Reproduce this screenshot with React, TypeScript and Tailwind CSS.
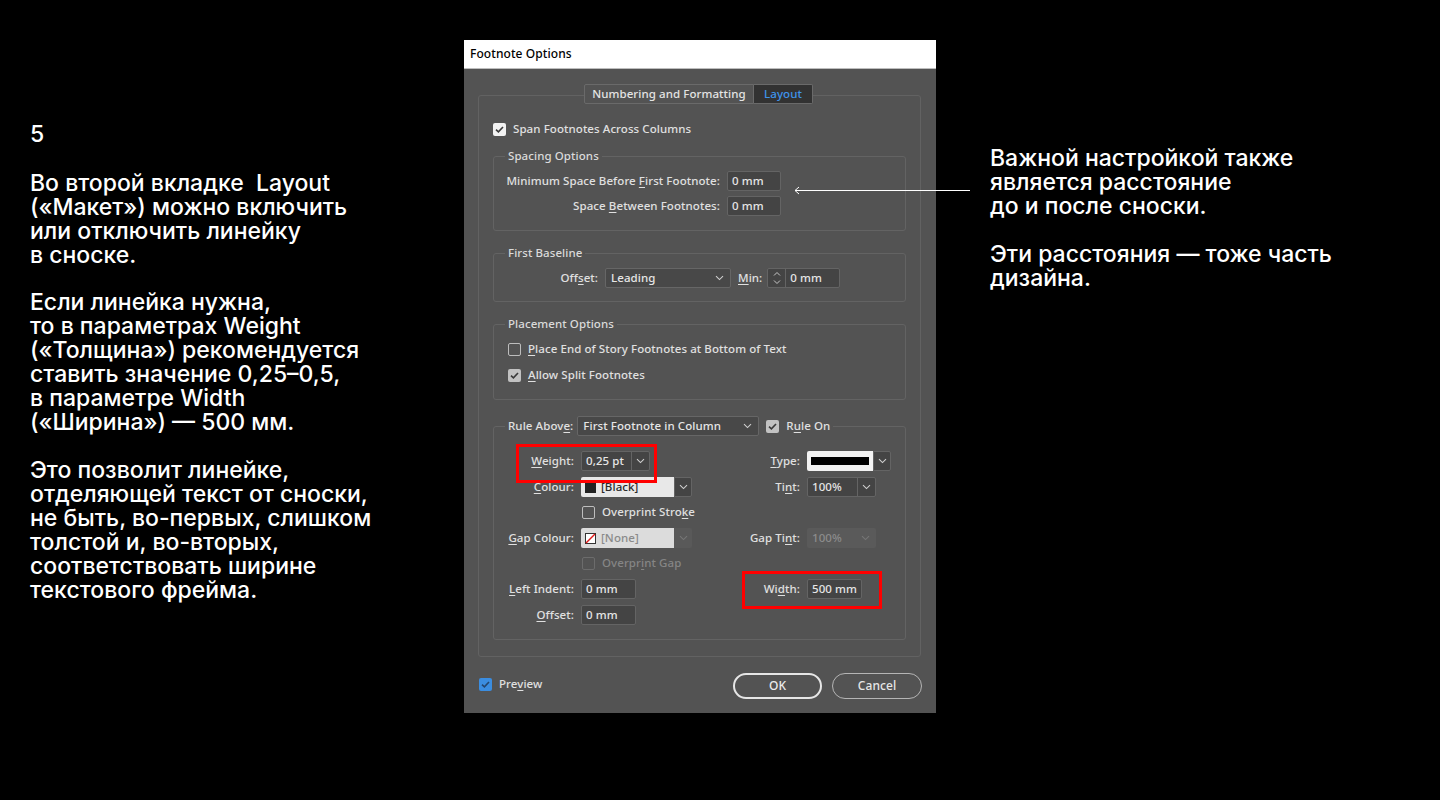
import React from "react";

type CheckState = "off" | "white" | "gray" | "blue" | "disabled";

function Chevron({ dim }: { dim?: boolean }) {
  return (
    <svg width="9" height="6" viewBox="0 0 9 6" fill="none">
      <path d="M1 1.2 L4.5 4.6 L8 1.2" stroke={dim ? "#767676" : "#cfcfcf"} strokeWidth="1.1" />
    </svg>
  );
}

function Check({ state }: { state: CheckState }) {
  const box = {
    off: "border border-[#bdbdbd]",
    white: "bg-[#f2f2f2]",
    gray: "bg-[#c2c2c2]",
    blue: "bg-[#3b8de0]",
    disabled: "border border-[#6c6c6c]",
  }[state];
  const on = state === "white" || state === "gray" || state === "blue";
  return (
    <span className={`flex h-[13px] w-[13px] shrink-0 items-center justify-center rounded-[2px] ${box}`}>
      {on && (
        <svg width="9" height="7" viewBox="0 0 9 7" fill="none">
          <path d="M1 3.6 L3.4 5.8 L8 1" stroke={state === "blue" ? "#24466e" : "#3a3a3a"} strokeWidth="1.6" />
        </svg>
      )}
    </span>
  );
}

function Input({ value, w }: { value: string; w: string }) {
  return (
    <div className={`flex h-[20px] ${w} items-center whitespace-nowrap rounded-[2px] border border-[#646464] bg-[#444444] px-[4px] text-[#e6e6e6]`}>
      {value}
    </div>
  );
}

function Select({ value, w }: { value: string; w: string }) {
  return (
    <div className={`flex h-[20px] ${w} items-center justify-between whitespace-nowrap rounded-[2px] border border-[#666666] bg-[#484848] pl-[5px] pr-[6px] text-[#e6e6e6]`}>
      <span>{value}</span>
      <Chevron />
    </div>
  );
}

function Combo({ value, w }: { value: string; w: string }) {
  return (
    <div className={`flex h-[20px] ${w} items-stretch whitespace-nowrap rounded-[2px] border border-[#646464] bg-[#444444] text-[#e6e6e6]`}>
      <span className="flex flex-1 items-center px-[4px]">{value}</span>
      <span className="flex w-[18px] items-center justify-center border-l border-[#646464]">
        <Chevron />
      </span>
    </div>
  );
}

function Legend({ children }: { children: React.ReactNode }) {
  return <legend className="ml-[11px] px-[3px] leading-[16px] text-[#dadada]">{children}</legend>;
}

function RLabel({ w, children }: { w: string; children: React.ReactNode }) {
  return <span className={`${w} shrink-0 whitespace-nowrap pr-[7px] text-right text-[#e0e0e0]`}>{children}</span>;
}

function Dialog() {
  return (
    <div className="mt-[40px] flex h-[673px] w-[472px] shrink-0 flex-col bg-[#535353] font-['Noto_Sans',sans-serif] text-[11.5px] tracking-[0.08px]">
      <div className="flex h-[29px] shrink-0 items-center border-b border-[#bdbdbd] bg-white pl-[6px] text-[12px] text-black">
        Footnote Options
      </div>

      <div className="pt-[15px]">
        <div className="relative z-10 ml-[120px] flex h-[20px] w-fit">
          <span className="flex w-[170px] items-center justify-center rounded-l-[2px] border border-[#6a6a6a] bg-[#535353] text-[#e4e4e4]">
            Numbering and Formatting
          </span>
          <span className="flex w-[59px] items-center justify-center rounded-r-[2px] border border-l-0 border-[#6a6a6a] bg-[#323232] text-[#3f94ea]">
            Layout
          </span>
        </div>

        <div className="mx-[14px] mr-[15px] -mt-[9px] rounded-[3px] border border-[#626262] px-[14px] pb-[16px] pt-[23px]">
          <div className="flex h-[20px] items-center gap-[7px] text-[#e0e0e0]">
            <Check state="white" />
            <span>Span Footnotes Across Columns</span>
          </div>

          <fieldset className="mt-[9px] rounded-[3px] border border-[#636363] pb-[14px] pt-[7px]">
            <Legend>Spacing Options</Legend>
            <div className="flex h-[20px] items-center">
              <RLabel w="w-[233px]">
                Minimum Space Before <u className="underline-offset-2">F</u>irst Footnote:
              </RLabel>
              <Input value="0 mm" w="w-[54px]" />
            </div>
            <div className="mt-[5px] flex h-[20px] items-center">
              <RLabel w="w-[233px]">
                Space <u className="underline-offset-2">B</u>etween Footnotes:
              </RLabel>
              <Input value="0 mm" w="w-[54px]" />
            </div>
          </fieldset>

          <fieldset className="mt-[14px] rounded-[3px] border border-[#636363] pb-[13px] pt-[7px]">
            <Legend>First Baseline</Legend>
            <div className="flex h-[20px] items-center">
              <RLabel w="w-[111px]">
                Off<u className="underline-offset-2">s</u>et:
              </RLabel>
              <Select value="Leading" w="w-[126px]" />
              <span className="ml-[7px] text-[#e0e0e0]">
                <u className="underline-offset-2">M</u>in:
              </span>
              <div className="ml-[5px] flex h-[20px] w-[73px] items-stretch rounded-[2px] border border-[#646464] bg-[#444444] text-[#e6e6e6]">
                <span className="flex w-[18px] items-center justify-center border-r border-[#646464]">
                  <svg width="8" height="14" viewBox="0 0 8 14" fill="none">
                    <path d="M1 4.5 L4 1.5 L7 4.5" stroke="#c8c8c8" strokeWidth="1" />
                    <path d="M1 9.5 L4 12.5 L7 9.5" stroke="#c8c8c8" strokeWidth="1" />
                  </svg>
                </span>
                <span className="flex items-center px-[4px]">0 mm</span>
              </div>
            </div>
          </fieldset>

          <fieldset className="mt-[14px] rounded-[3px] border border-[#636363] pb-[14px] pt-[7px]">
            <Legend>Placement Options</Legend>
            <div className="flex h-[20px] items-center gap-[7px] pl-[14px] text-[#e0e0e0]">
              <Check state="off" />
              <span>
                <u className="underline-offset-2">P</u>lace End of Story Footnotes at Bottom of Text
              </span>
            </div>
            <div className="mt-[6px] flex h-[20px] items-center gap-[7px] pl-[14px] text-[#e0e0e0]">
              <Check state="gray" />
              <span>
                <u className="underline-offset-2">A</u>llow Split Footnotes
              </span>
            </div>
          </fieldset>

          <fieldset className="mt-[16px] rounded-[3px] border border-[#636363] pb-[14px] pt-[15px]">
            <legend className="ml-[11px] px-[3px]">
              <div className="flex h-[20px] items-center whitespace-nowrap text-[#e0e0e0]">
                <span>
                  Rule Abov<u className="underline-offset-2">e</u>:
                </span>
                <Select value="First Footnote in Column" w="ml-[4px] w-[182px]" />
                <span className="ml-[7px]">
                  <Check state="gray" />
                </span>
                <span className="ml-[7px]">
                  R<u className="underline-offset-2">u</u>le On
                </span>
              </div>
            </legend>

            <div className="relative flex h-[20px] items-center">
              <div className="flex w-[245px] items-center">
                <RLabel w="w-[87px]">
                  <u className="underline-offset-2">W</u>eight:
                </RLabel>
                <Combo value="0,25 pt" w="w-[69px]" />
              </div>
              <RLabel w="w-[68px]">
                <u className="underline-offset-2">T</u>ype:
              </RLabel>
              <div className="flex h-[20px] items-stretch">
                <span className="flex w-[66px] items-center justify-center rounded-l-[2px] bg-[#f2f2f2]">
                  <span className="h-[8px] w-[58px] bg-black" />
                </span>
                <span className="flex w-[18px] items-center justify-center rounded-r-[2px] border border-[#646464] bg-[#444444]">
                  <Chevron />
                </span>
              </div>
              <span className="absolute left-[22px] top-[-7px] h-[39px] w-[141px] border-[3px] border-[#ff0000]" />
            </div>

            <div className="mt-[6px] flex h-[20px] items-center">
              <div className="flex w-[245px] items-center">
                <RLabel w="w-[87px]">
                  <u className="underline-offset-2">C</u>olour:
                </RLabel>
                <div className="flex h-[20px] items-stretch">
                  <span className="flex w-[93px] items-center gap-[5px] rounded-l-[2px] bg-[#e8e8e8] pl-[4px] text-[#2a2a2a]">
                    <span className="h-[11px] w-[11px] bg-[#222222]" />
                    [Black]
                  </span>
                  <span className="flex w-[18px] items-center justify-center rounded-r-[2px] border border-[#646464] bg-[#444444]">
                    <Chevron />
                  </span>
                </div>
              </div>
              <RLabel w="w-[68px]">
                Ti<u className="underline-offset-2">n</u>t:
              </RLabel>
              <Combo value="100%" w="w-[69px]" />
            </div>

            <div className="mt-[5px] flex h-[20px] items-center gap-[7px] pl-[88px] text-[#e0e0e0]">
              <Check state="off" />
              <span>
                Overprint Stro<u className="underline-offset-2">k</u>e
              </span>
            </div>

            <div className="mt-[6px] flex h-[20px] items-center">
              <div className="flex w-[245px] items-center">
                <RLabel w="w-[87px]">
                  <u className="underline-offset-2">G</u>ap Colour:
                </RLabel>
                <div className="flex h-[20px] items-stretch">
                  <span className="flex w-[93px] items-center gap-[5px] rounded-l-[2px] bg-[#dcdcdc] pl-[4px] text-[#8a8a8a]">
                    <svg width="11" height="11" viewBox="0 0 11 11">
                      <rect x="0.5" y="0.5" width="10" height="10" fill="#ffffff" stroke="#333333" />
                      <path d="M1 10 L10 1" stroke="#e01b1b" strokeWidth="1.4" />
                    </svg>
                    [None]
                  </span>
                  <span className="flex w-[18px] items-center justify-center rounded-r-[2px] bg-[#595959]">
                    <Chevron dim />
                  </span>
                </div>
              </div>
              <RLabel w="w-[68px]">
                Gap Ti<u className="underline-offset-2">n</u>t:
              </RLabel>
              <div className="flex h-[20px] w-[69px] items-center justify-between rounded-[2px] bg-[#5a5a5a] pl-[5px] pr-[6px] text-[#8c8c8c]">
                <span>100%</span>
                <Chevron dim />
              </div>
            </div>

            <div className="mt-[5px] flex h-[20px] items-center gap-[7px] pl-[88px] text-[#858585]">
              <Check state="disabled" />
              <span>
                Overpr<u className="underline-offset-2">i</u>nt Gap
              </span>
            </div>

            <div className="relative mt-[6px] flex h-[20px] items-center">
              <div className="flex w-[245px] items-center">
                <RLabel w="w-[87px]">
                  <u className="underline-offset-2">L</u>eft Indent:
                </RLabel>
                <Input value="0 mm" w="w-[55px]" />
              </div>
              <RLabel w="w-[68px]">
                Wi<u className="underline-offset-2">d</u>th:
              </RLabel>
              <Input value="500 mm" w="w-[55px]" />
              <span className="absolute left-[248px] top-[-8px] h-[38px] w-[140px] border-[3px] border-[#ff0000]" />
            </div>

            <div className="mt-[6px] flex h-[20px] items-center">
              <RLabel w="w-[87px]">
                <u className="underline-offset-2">O</u>ffset:
              </RLabel>
              <Input value="0 mm" w="w-[55px]" />
            </div>
          </fieldset>
        </div>

        <div className="mt-[16px] flex h-[26px] items-center pl-[15px] pr-[14px]">
          <div className="-mt-[4px] flex items-center gap-[7px] text-[#e0e0e0]">
            <Check state="blue" />
            <span>
              Pre<u className="underline-offset-2">v</u>iew
            </span>
          </div>
          <div className="ml-auto flex gap-[10px]">
            <span className="flex h-[26px] w-[89px] items-center justify-center rounded-full border-2 border-[#e6e6e6] text-[12px] text-[#ececec]">
              OK
            </span>
            <span className="flex h-[26px] w-[90px] items-center justify-center rounded-full border-[1.5px] border-[#b5b5b5] text-[12px] text-[#e6e6e6]">
              Cancel
            </span>
          </div>
        </div>
      </div>
    </div>
  );
}

export default function App() {
  return (
    <div className="relative flex h-[800px] w-[1440px] overflow-hidden bg-black font-['Inter',sans-serif] text-[23px] font-medium leading-[24px] text-white">
      <div className="w-[464px] shrink-0 pl-[30px] pt-[122px]">
        <p>5</p>
        <p className="mt-[25px]">
          Во второй вкладке&nbsp; Layout
          <br />
          («Макет») можно включить
          <br />
          или отключить линейку
          <br />в сноске.
        </p>
        <p className="mt-[23px]">
          Если линейка нужна,
          <br />
          то в параметрах Weight
          <br />
          («Толщина») рекомендуется
          <br />
          ставить значение 0,25–0,5,
          <br />в параметре Width
          <br />
          («Ширина») — 500 мм.
        </p>
        <p className="mt-[24px]">
          Это позволит линейке,
          <br />
          отделяющей текст от сноски,
          <br />
          не быть, во-первых, слишком
          <br />
          толстой и, во-вторых,
          <br />
          соответствовать ширине
          <br />
          текстового фрейма.
        </p>
      </div>

      <Dialog />

      <div className="shrink-0 pl-[54px] pt-[146px]">
        <p>
          Важной настройкой также
          <br />
          является расстояние
          <br />
          до и после сноски.
        </p>
        <p className="mt-[24px]">
          Эти расстояния — тоже часть
          <br />
          дизайна.
        </p>
      </div>

      <svg className="absolute left-[793px] top-[186px]" width="178" height="9" viewBox="0 0 178 9" fill="none">
        <path d="M2 4.5 H177" stroke="#ffffff" strokeWidth="1" />
        <path d="M6 1 L2 4.5 L6 8" stroke="#ffffff" strokeWidth="1" />
      </svg>
    </div>
  );
}
